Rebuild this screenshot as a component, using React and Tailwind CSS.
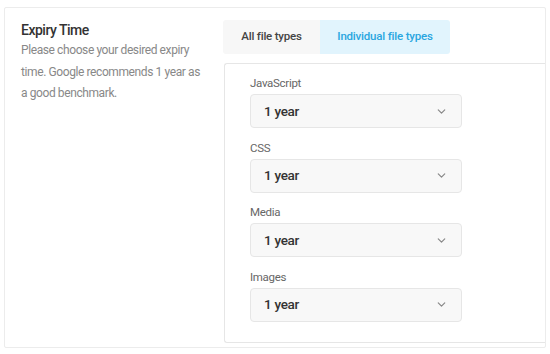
import { ChevronDown } from "lucide-react";

const TYPES = ["JavaScript", "CSS", "Media", "Images"];

function Select({ label }) {
  return (
    <div className="flex flex-col">
      <label className="text-[11.5px] leading-[16px] tracking-[-0.3px] text-[#666] mb-[3px]">{label}</label>
      <div className="w-[212px] h-[34px] flex items-center justify-between pl-[13px] pr-[13px] bg-[#f8f8f8] border border-[#e6e6e6] rounded-[4px]">
        <span className="text-[13.5px] font-medium tracking-[-0.3px] text-[#333]">1 year</span>
        <ChevronDown className="w-[13px] h-[13px] text-[#888]" strokeWidth={2.2} />
      </div>
    </div>
  );
}

export default function App() {
  return (
    <div className="w-[550px] h-[354px] bg-white pt-[7px] pl-[4px]" style={{ fontFamily: "Roboto, 'Liberation Sans', sans-serif" }}>
      <div className="w-[542px] h-[341px] border border-[#ececec] rounded-[2px] flex pt-[12px] pb-[4px]">
        {/* left column */}
        <div className="w-[218px] pl-[16px] pr-[20px]">
          <h3 className="text-[14px] leading-[18px] font-medium tracking-[-0.5px] text-[#333] mt-[1px] mb-[1px]">Expiry Time</h3>
          <p className="text-[12px] leading-[21.5px] tracking-[-0.4px] text-[#888]">
            Please choose your desired expiry time. Google recommends 1 year as a good benchmark.
          </p>
        </div>

        {/* right column */}
        <div className="flex-1 flex flex-col">
          <div className="flex h-[34px] mb-[9px]">
            <div className="w-[97px] flex items-center justify-center bg-[#f7f7f7] text-[11.5px] font-medium tracking-[-0.2px] text-[#444] rounded-l-[3px]">
              All file types
            </div>
            <div className="w-[130px] flex items-center justify-center bg-[#e1f4fd] text-[11.5px] font-medium tracking-[-0.2px] text-[#2aa6e0] rounded-r-[3px]">
              Individual file types
            </div>
          </div>
          <div className="flex-1 ml-[1px] border border-r-0 border-[#e6e6e6] rounded-l-[3px] pl-[25px] pt-[11px] flex flex-col gap-[11.5px]">
            {TYPES.map((t) => (
              <Select key={t} label={t} />
            ))}
          </div>
        </div>
      </div>
    </div>
  );
}
